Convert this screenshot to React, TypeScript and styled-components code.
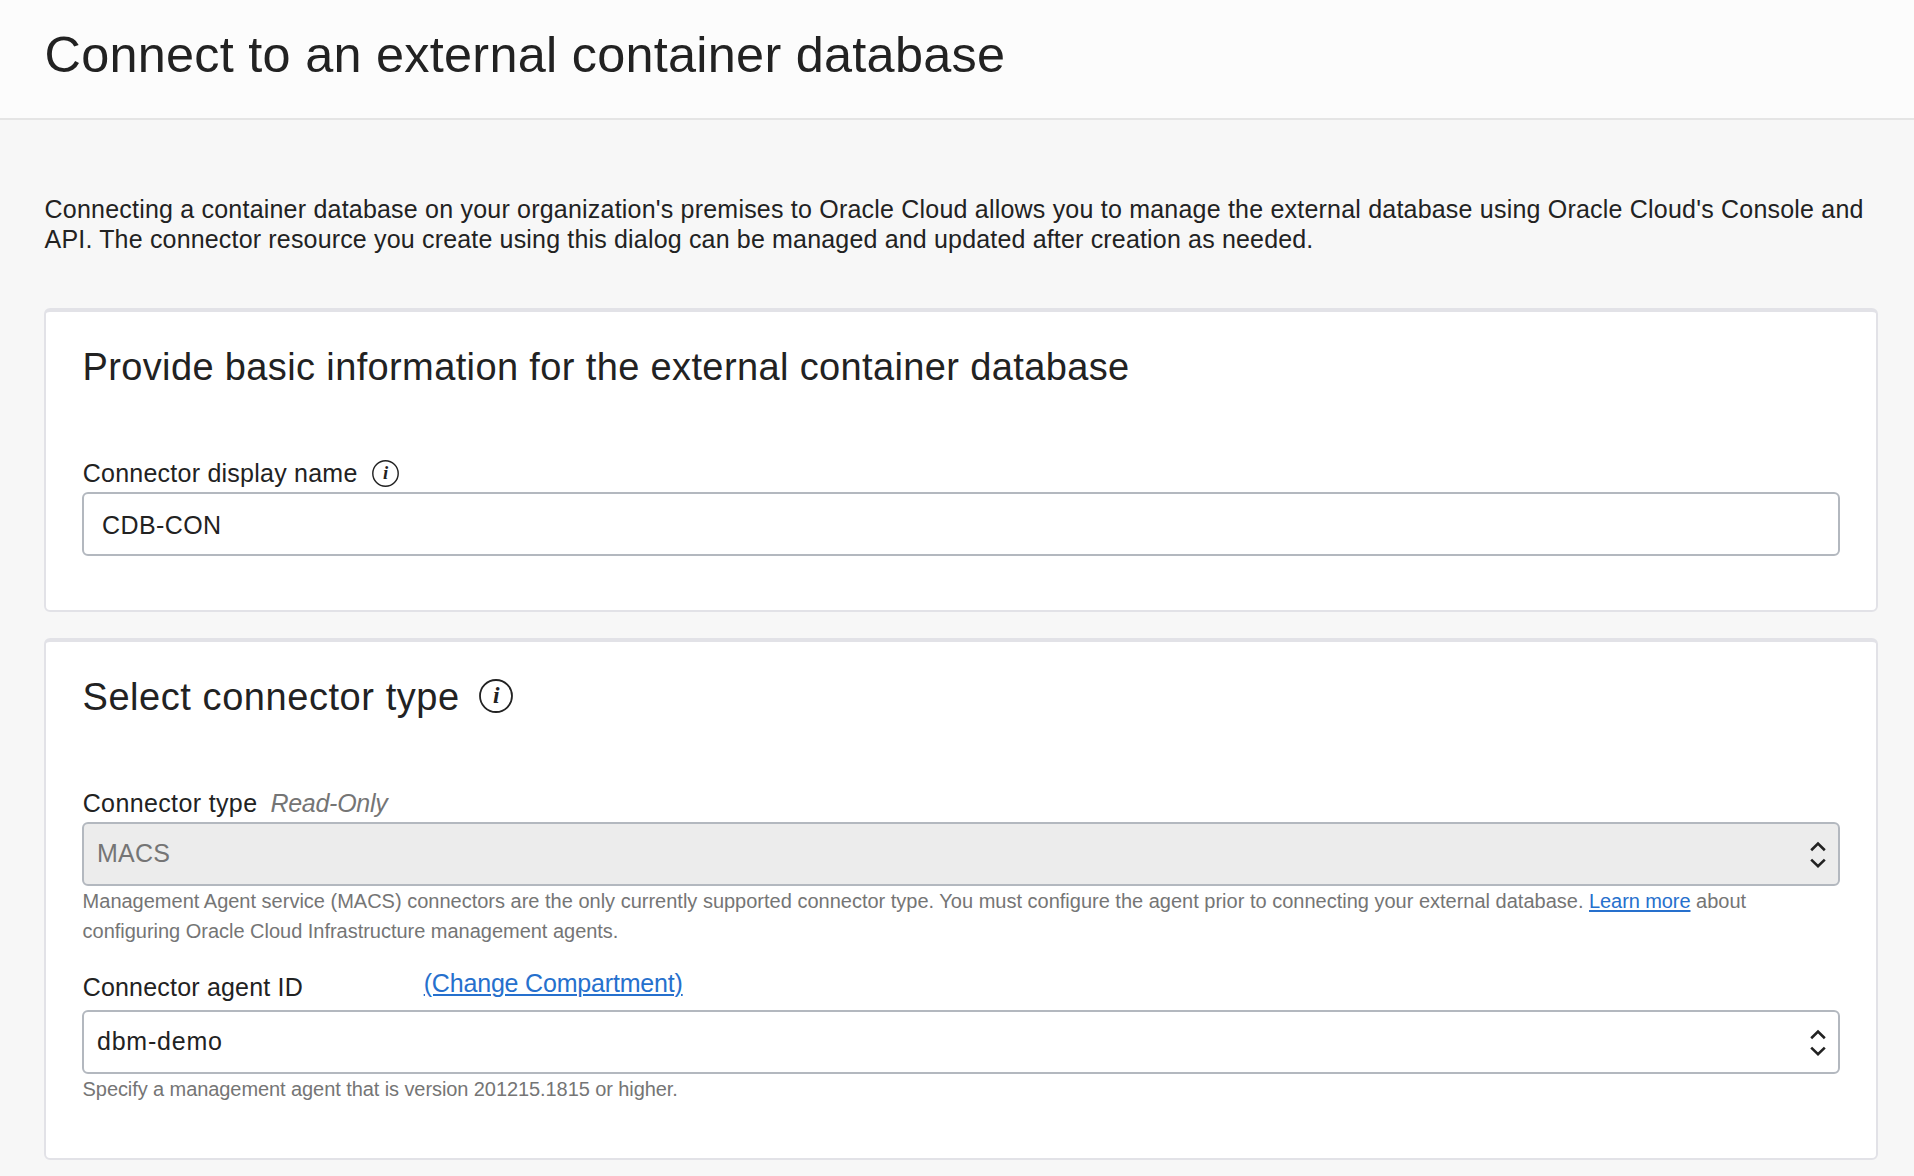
import React from 'react';
import styled, { createGlobalStyle } from 'styled-components';

const GlobalStyle = createGlobalStyle`
  * { box-sizing: border-box; }
  body {
    margin: 0;
    background: #f7f7f7;
    color: #222;
    font-family: "Liberation Sans", Arial, sans-serif;
    font-size: 25px;
    line-height: 30px;
  }
`;

const Page = styled.div`
  min-height: 1176px;
`;

const Header = styled.header`
  height: 120px;
  padding: 27px 44px 0 44.5px;
  background: #fcfcfc;
  border-bottom: 2px solid #e5e5e5;
`;

const Title = styled.h1`
  margin: 0;
  font-size: 50.4px;
  font-weight: 400;
  line-height: 56px;
  letter-spacing: 0.27px;
`;

const Main = styled.main`
  display: flex;
  flex-direction: column;
  padding: 74px 36px 0 44px;
`;

const Intro = styled.p`
  margin: 0 0 54px;
  padding-left: 0.6px;
  white-space: nowrap;
`;

const Tracked = styled.span<{ $spacing: number }>`
  letter-spacing: ${(p) => p.$spacing}px;
`;

const Card = styled.section`
  padding: 33px 36px 54px;
  background: #fff;
  border: 2px solid #e2e2e7;
  border-top-width: 4px;
  border-radius: 6px;

  & + & {
    margin-top: 26px;
  }
`;

const CardTitle = styled.h2<{ $spacing: number }>`
  display: flex;
  align-items: flex-start;
  gap: 19.5px;
  height: 44px;
  margin: 0 0 69px;
  padding-left: 0.5px;
  font-size: 38px;
  font-weight: 400;
  line-height: 44px;
  letter-spacing: ${(p) => p.$spacing}px;
`;

const LabelRow = styled.div<{ $gap?: number }>`
  display: flex;
  align-items: flex-start;
  gap: ${(p) => p.$gap ?? 0}px;
  height: 34px;
  padding-left: 0.7px;
`;

const AgentRow = styled.div`
  display: grid;
  grid-template-columns: 341px auto;
  justify-content: start;
  align-items: start;
  height: 42px;
  margin-top: 22px;
  padding-left: 0.7px;
`;

const AgentLabel = styled.label`
  padding-top: 4px;
  letter-spacing: 0.19px;
`;

const Label = styled.label<{ $spacing: number }>`
  letter-spacing: ${(p) => p.$spacing}px;
`;

const ReadOnly = styled.em`
  color: #757575;
  letter-spacing: -0.27px;
`;

const Field = styled.div<{ $disabled?: boolean; $spacing: number }>`
  display: flex;
  justify-content: space-between;
  height: 64px;
  padding: 14px 12px 0 13px;
  background: ${(p) => (p.$disabled ? '#ececec' : '#fff')};
  color: ${(p) => (p.$disabled ? '#757575' : '#222')};
  border: 2px solid #b3b8bf;
  border-radius: 6px;
  letter-spacing: ${(p) => p.$spacing}px;
`;

const TextField = styled(Field)`
  padding: 16px 18px 0;
`;

const Help = styled.p`
  margin: 0;
  padding-left: 0.6px;
  color: #757575;
  font-size: 20px;
  line-height: 30px;
  white-space: nowrap;
`;

const Link = styled.a<{ $spacing?: number }>`
  color: #2670cd;
  letter-spacing: ${(p) => p.$spacing ?? 0}px;
  text-decoration: underline;
  text-decoration-thickness: 2px;
  text-underline-offset: 2px;
`;

const InfoSvg = styled.svg<{ $top: number }>`
  flex: none;
  margin-top: ${(p) => p.$top}px;
  overflow: visible;
`;

const ChevronSvg = styled.svg`
  flex: none;
  margin-top: 3px;
`;

function InfoIcon({ size, top }: { size: number; top: number }) {
  return (
    <InfoSvg $top={top} width={size} height={size} viewBox="0 0 34 34">
      <circle cx="17" cy="17" r="16" fill="none" stroke="#222" strokeWidth="1.8" />
      <text
        x="17.2"
        y="24"
        textAnchor="middle"
        fill="#222"
        fontFamily="Liberation Serif, serif"
        fontStyle="italic"
        fontWeight="700"
        fontSize="23.5"
        letterSpacing="0"
      >
        i
      </text>
    </InfoSvg>
  );
}

function Chevrons() {
  return (
    <ChevronSvg width="16" height="28" viewBox="0 0 16 28" fill="none" stroke="#222" strokeWidth="2.6">
      <path d="M1.2 9.2 L8 2.6 L14.8 9.2" />
      <path d="M1.2 18.6 L8 25.2 L14.8 18.6" />
    </ChevronSvg>
  );
}

export default function App() {
  return (
    <Page>
      <GlobalStyle />
      <Header>
        <Title>Connect to an external container database</Title>
      </Header>
      <Main>
        <Intro>
          <Tracked $spacing={0.207}>
            Connecting a container database on your organization's premises to Oracle Cloud allows you to manage the
            external database using Oracle Cloud's Console and
          </Tracked>
          <br />
          <Tracked $spacing={0.17}>
            API. The connector resource you create using this dialog can be managed and updated after creation as
            needed.
          </Tracked>
        </Intro>

        <Card>
          <CardTitle $spacing={0.37}>Provide basic information for the external container database</CardTitle>
          <LabelRow $gap={14.6}>
            <Label $spacing={0.24}>Connector display name</Label>
            <InfoIcon size={27} top={2.3} />
          </LabelRow>
          <TextField $spacing={0.4}>CDB-CON</TextField>
        </Card>

        <Card>
          <CardTitle $spacing={0.56}>
            Select connector type
            <InfoIcon size={34} top={4} />
          </CardTitle>
          <LabelRow $gap={13}>
            <Label $spacing={0.37}>Connector type</Label>
            <ReadOnly>Read-Only</ReadOnly>
          </LabelRow>
          <Field $disabled $spacing={0.2}>
            MACS
            <Chevrons />
          </Field>
          <Help>
            Management Agent service (MACS) connectors are the only currently supported connector type. You must
            configure the agent prior to connecting your external database. <Link $spacing={-0.08}>Learn more</Link>{' '}
            about
            <br />
            <Tracked $spacing={-0.02}>configuring Oracle Cloud Infrastructure management agents.</Tracked>
          </Help>
          <AgentRow>
            <AgentLabel>Connector agent ID</AgentLabel>
            <Link $spacing={-0.18}>(Change Compartment)</Link>
          </AgentRow>
          <Field $spacing={0.78}>
            dbm-demo
            <Chevrons />
          </Field>
          <Help>
            <Tracked $spacing={-0.08}>Specify a management agent that is version 201215.1815 or higher.</Tracked>
          </Help>
        </Card>
      </Main>
    </Page>
  );
}
